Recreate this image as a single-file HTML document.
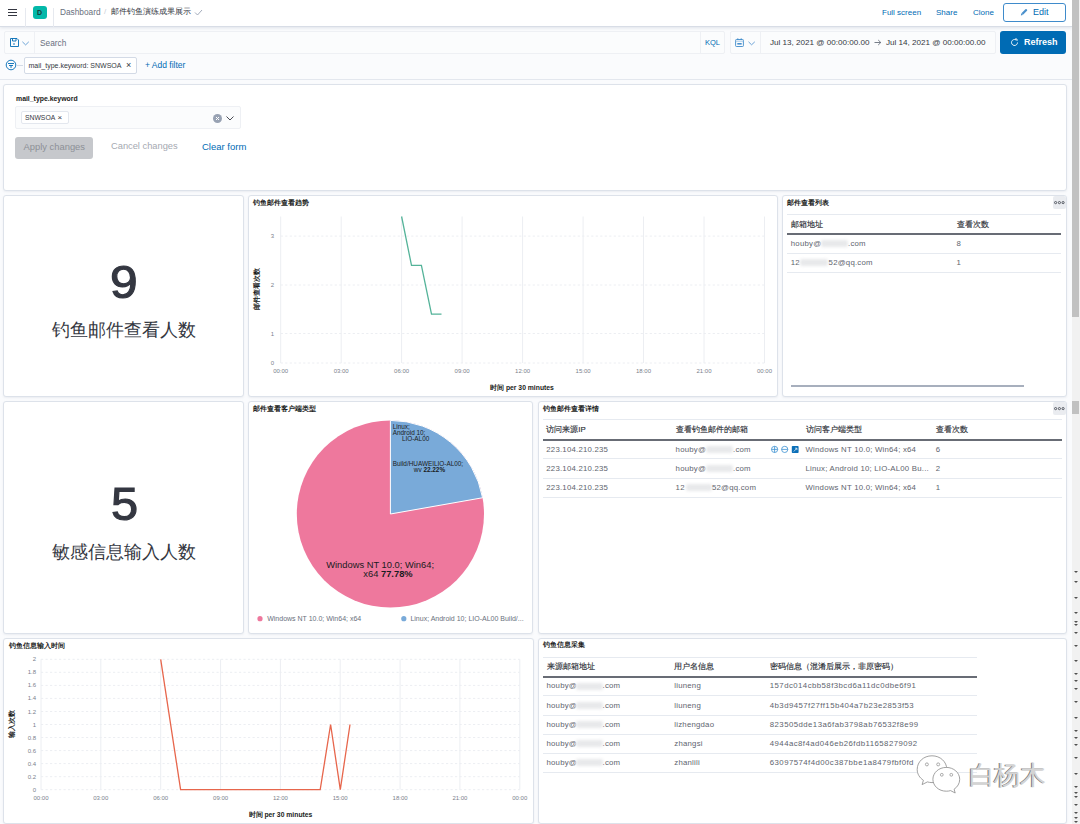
<!DOCTYPE html>
<html><head><meta charset="utf-8">
<style>
*{margin:0;padding:0;box-sizing:border-box}
html,body{width:1080px;height:824px;overflow:hidden}
body{background:#fafbfd;font-family:"Liberation Sans",sans-serif;color:#343741;position:relative}
.a{position:absolute}
.t{position:absolute;white-space:nowrap;line-height:1}
.pnl{position:absolute;background:#fff;border:1px solid #dde2ea;border-radius:3px;box-shadow:0 1px 2px rgba(152,162,179,.15)}
.lnk{color:#006bb4}
.vl{position:absolute;width:1px;background:#eef0f3}
.xl{width:40px;text-align:center;font-size:6px;color:#7b818c}
.yl{width:20px;text-align:right;font-size:6px;color:#7b818c}
.ttl{font-size:6.6px;font-weight:700;color:#1a1c21}
.th{margin-top:.7px;font-size:8px;font-weight:400;color:#2b2e35;-webkit-text-stroke:0.15px #2b2e35}
.td{margin-top:.4px;font-size:8px;letter-spacing:.22px;color:#60646e}
.hs{font-size:8px;letter-spacing:.45px}
.blr{background:#e8e9eb;filter:blur(1.4px);border-radius:2px}
.dots{width:13px;height:13px;background:#eaecf0;border-radius:2px}
.arw{left:1073.5px;width:0;height:0;border-left:2.5px solid transparent;border-right:2.5px solid transparent;border-top:2.5px solid #505050}
.hd{position:absolute;height:0;border-top:1px dashed #e9ecf1}
</style></head><body>

<!-- header -->
<div class="a" style="left:0;top:0;width:1072px;height:27px;background:#fff;border-bottom:1px solid #d8dde6;box-shadow:0 1px 3px rgba(152,162,179,.25)"></div>
<div class="a" style="left:8px;top:9.2px;width:9px;height:1.1px;background:#343741"></div>
<div class="a" style="left:8px;top:12.2px;width:9px;height:1.1px;background:#343741"></div>
<div class="a" style="left:8px;top:15.2px;width:9px;height:1.1px;background:#343741"></div>
<div class="a" style="left:25px;top:8px;width:1px;height:18.5px;background:#e6e9ef"></div>
<div class="a" style="left:33px;top:5.8px;width:13.8px;height:13.6px;background:#03b8a9;border-radius:3px"></div>
<div class="t" style="left:37px;top:8.5px;font-size:7px;font-weight:700;color:#1d3a36">D</div>
<div class="a" style="left:53px;top:8px;width:1px;height:18.5px;background:#e6e9ef"></div>
<div class="t" style="left:60px;top:8px;font-size:8.3px;color:#69707d">Dashboard</div>
<div class="t" style="left:104px;top:8px;font-size:8px;color:#c9ced6">/</div>
<div class="t" style="left:111px;top:8.3px;font-size:7.65px;color:#343741">邮件钓鱼演练成果展示</div>
<svg class="a" style="left:194px;top:9px" width="9" height="7" viewBox="0 0 9 7"><path d="M1 3.5 L3.5 6 L8 1" fill="none" stroke="#98a2b3" stroke-width="0.9"/></svg>
<div class="t lnk" style="left:882px;top:8.5px;font-size:8px">Full screen</div>
<div class="t lnk" style="left:936px;top:8.5px;font-size:8px">Share</div>
<div class="t lnk" style="left:973px;top:8.5px;font-size:8px">Clone</div>
<div class="a" style="left:1003px;top:3px;width:63px;height:19px;border:1px solid #3f8bcb;border-radius:3px;background:#fff"></div>
<svg class="a" style="left:1020px;top:8px" width="8" height="8" viewBox="0 0 8 8"><path d="M0.9 7.4 L1.2 5.5 L5.4 1.2 Q6 0.7 6.6 1.2 L7.1 1.7 Q7.5 2.3 7 2.8 L2.8 7.1 Z" fill="#4a90cc"/><path d="M1.6 5.3 L3.2 6.9" stroke="#fff" stroke-width="0.5"/></svg>
<div class="t lnk" style="left:1033px;top:7.5px;font-size:9px">Edit</div>

<!-- search row -->
<div class="a" style="left:4px;top:31px;width:721px;height:23px;background:#fbfcfd;border:1px solid #eef0f4;border-radius:2px"></div>
<div class="a" style="left:34px;top:31px;width:1px;height:23px;background:#eef0f4"></div>
<svg class="a" style="left:10px;top:38px" width="9" height="9" viewBox="0 0 9 9"><path d="M0.5 0.5 H7 L8.5 2 V8.5 H0.5 Z M2.5 0.5 V3 H6 V0.5 M3 6 h2" fill="none" stroke="#006bb4" stroke-width="0.9"/></svg>
<svg class="a" style="left:22px;top:40.5px" width="8" height="5" viewBox="0 0 8 5"><path d="M0.4 0.8 L3.6 3.9 L6.8 0.8" fill="none" stroke="#5c9ad2" stroke-width="0.9"/></svg>
<div class="t" style="left:40px;top:38.5px;font-size:8.3px;color:#69707d">Search</div>
<div class="a" style="left:700px;top:31px;width:1px;height:23px;background:#eef0f4"></div>
<div class="t lnk" style="left:705px;top:38.5px;font-size:7.5px">KQL</div>
<div class="a" style="left:730px;top:31px;width:266px;height:23px;background:#fbfcfd;border:1px solid #eef0f4;border-radius:2px"></div>
<div class="a" style="left:760px;top:31px;width:1px;height:23px;background:#eef0f4"></div>
<svg class="a" style="left:735px;top:38px" width="9" height="9" viewBox="0 0 9 9"><rect x="0.6" y="1.5" width="7.8" height="7" rx="0.8" fill="none" stroke="#3f8bcb" stroke-width="0.9"/><path d="M0.6 3.2 H8.4" stroke="#8fbbe2" stroke-width="0.8"/><rect x="2.3" y="5" width="4.4" height="1.6" fill="#4a92cf"/><path d="M2.8 0.3 V2 M6.2 0.3 V2" stroke="#3f8bcb" stroke-width="0.9"/></svg>
<svg class="a" style="left:747.5px;top:40.5px" width="8" height="5" viewBox="0 0 8 5"><path d="M0.5 0.8 L3.6 3.8 L6.8 0.8" fill="none" stroke="#5c9ad2" stroke-width="0.9"/></svg>
<div class="t" style="left:770px;top:38.5px;font-size:8.1px;color:#343741">Jul 13, 2021 @ 00:00:00.00</div>
<svg class="a" style="left:874px;top:39px" width="8" height="7" viewBox="0 0 8 7"><path d="M0.5 3.5 H6.8 M4.2 1 L6.8 3.5 L4.2 6" fill="none" stroke="#69707d" stroke-width="0.9"/></svg>
<div class="t" style="left:886px;top:38.5px;font-size:8.1px;color:#343741">Jul 14, 2021 @ 00:00:00.00</div>
<div class="a" style="left:1000px;top:31px;width:66px;height:23px;background:#006bb4;border-radius:3px"></div>
<svg class="a" style="left:1010px;top:38px" width="9" height="9" viewBox="0 0 9 9"><path d="M7.5 4.5 A3 3 0 1 1 6 1.9" fill="none" stroke="#fff" stroke-width="0.9"/><path d="M5 1 H7 V3" fill="none" stroke="#fff" stroke-width="0.9"/></svg>
<div class="t" style="left:1024px;top:37.5px;font-size:9px;font-weight:700;color:#fff">Refresh</div>

<!-- filter row -->
<svg class="a" style="left:5px;top:59px" width="12" height="12" viewBox="0 0 12 12"><circle cx="6" cy="6" r="4.8" fill="none" stroke="#006bb4" stroke-width="0.9"/><path d="M3 4.5 H9 M4 6.5 H8 M6 6.5 V9" stroke="#006bb4" stroke-width="0.9"/></svg>
<div class="a" style="left:17px;top:65px;width:6px;height:1px;background:#d3dae6"></div>
<div class="a" style="left:24px;top:57px;width:113px;height:17px;background:#fff;border:1px solid #d3dae6;border-radius:2px"></div>
<div class="t" style="left:28.5px;top:61.8px;font-size:7px;color:#343741">mail_type.keyword: SNWSOA</div>
<div class="t" style="left:126px;top:60.5px;font-size:9px;color:#343741">×</div>
<div class="t lnk" style="left:145px;top:61px;font-size:8.5px">+ Add filter</div>
<div class="a" style="left:0;top:79px;width:1072px;height:1px;background:#e3e7ee"></div>

<!-- panels -->
<div class="pnl" style="left:3px;top:84px;width:1064px;height:107px"></div>
<div class="pnl" style="left:3px;top:195px;width:241px;height:202px"></div>
<div class="pnl" style="left:248px;top:195px;width:530px;height:202px"></div>
<div class="pnl" style="left:782px;top:195px;width:285px;height:202px"></div>
<div class="pnl" style="left:3px;top:401px;width:241px;height:233px"></div>
<div class="pnl" style="left:248px;top:401px;width:285px;height:233px"></div>
<div class="pnl" style="left:538px;top:401px;width:529px;height:233px"></div>
<div class="pnl" style="left:3px;top:638px;width:531px;height:186px"></div>
<div class="pnl" style="left:538px;top:638px;width:529px;height:186px"></div>


<!-- controls panel content -->
<div class="t" style="left:16px;top:96px;font-size:6.9px;font-weight:700;color:#1a1c21">mail_type.keyword</div>
<div class="a" style="left:15px;top:106px;width:226px;height:23px;background:#fbfcfd;border:1px solid #eef0f4;border-radius:2px"></div>
<div class="a" style="left:20.5px;top:111px;width:48px;height:13px;background:#fff;border:1px solid #e3e7ee;border-radius:2px"></div>
<div class="t" style="left:25px;top:115px;font-size:6.8px;color:#343741">SNWSOA</div>
<div class="t" style="left:57.5px;top:114px;font-size:8px;color:#343741">×</div>
<div class="a" style="left:213px;top:113.5px;width:9px;height:9px;border-radius:50%;background:#98a2b3"></div>
<svg class="a" style="left:213px;top:113.5px" width="9" height="9" viewBox="0 0 9 9"><path d="M3 3 L6 6 M6 3 L3 6" stroke="#fff" stroke-width="1"/></svg>
<svg class="a" style="left:226px;top:116px" width="8" height="5" viewBox="0 0 8 5"><path d="M0.5 0.5 L4 4 L7.5 0.5" fill="none" stroke="#343741" stroke-width="0.9"/></svg>
<div class="a" style="left:15px;top:137px;width:78px;height:22px;background:#c6c8cc;border-radius:3px"></div>
<div class="t" style="left:23.5px;top:141.8px;font-size:9.4px;color:#8d9097">Apply changes</div>
<div class="t" style="left:111px;top:142.3px;font-size:9.3px;color:#a5a9b1">Cancel changes</div>
<div class="t lnk" style="left:202px;top:141.8px;font-size:9.5px">Clear form</div>

<!-- metric 9 -->
<div class="t" style="left:110px;top:258.5px;font-size:46px;font-weight:400;-webkit-text-stroke:1.1px #343741;color:#343741;transform:scaleX(1.08);transform-origin:0 0">9</div>
<div class="t" style="left:52px;top:320.8px;font-size:18.2px;color:#343741">钓鱼邮件查看人数</div>
<!-- metric 5 -->
<div class="t" style="left:110.5px;top:481px;font-size:46px;font-weight:400;-webkit-text-stroke:1.1px #343741;color:#343741;transform:scaleX(1.06);transform-origin:0 0">5</div>
<div class="t" style="left:52px;top:542.8px;font-size:18.2px;color:#343741">敏感信息输入人数</div>


<!-- chart titles -->
<div class="t ttl" style="left:253px;top:199.5px">钓鱼邮件查看趋势</div>
<div class="t ttl" style="left:253.5px;top:260px;transform:rotate(-90deg);transform-origin:0 0;top:310px">邮件查看次数</div>
<div class="t ttl" style="left:490px;top:385px;font-size:6.8px">时间 per 30 minutes</div>
<div class="t ttl" style="left:9px;top:642.5px">钓鱼信息输入时间</div>
<div class="t ttl" style="left:9px;top:738px;transform:rotate(-90deg);transform-origin:0 0">输入次数</div>
<div class="t ttl" style="left:248.5px;top:812px;font-size:6.8px">时间 per 30 minutes</div>
<svg class="a" style="left:0;top:0" width="1080" height="824" viewBox="0 0 1080 824">
<line x1="280.7" y1="216.5" x2="280.7" y2="363" stroke="#eceef2" stroke-width="1"/>
<line x1="341.2" y1="216.5" x2="341.2" y2="363" stroke="#eceef2" stroke-width="1"/>
<line x1="401.6" y1="216.5" x2="401.6" y2="363" stroke="#eceef2" stroke-width="1"/>
<line x1="462.1" y1="216.5" x2="462.1" y2="363" stroke="#eceef2" stroke-width="1"/>
<line x1="522.6" y1="216.5" x2="522.6" y2="363" stroke="#eceef2" stroke-width="1"/>
<line x1="583.1" y1="216.5" x2="583.1" y2="363" stroke="#eceef2" stroke-width="1"/>
<line x1="643.5" y1="216.5" x2="643.5" y2="363" stroke="#eceef2" stroke-width="1"/>
<line x1="704.0" y1="216.5" x2="704.0" y2="363" stroke="#eceef2" stroke-width="1"/>
<line x1="764.5" y1="216.5" x2="764.5" y2="363" stroke="#eceef2" stroke-width="1"/>
<line x1="280.7" y1="236.1" x2="764.5" y2="236.1" stroke="#eceef2" stroke-width="1" stroke-dasharray="2.2 2.3"/>
<line x1="280.7" y1="285" x2="764.5" y2="285" stroke="#eceef2" stroke-width="1" stroke-dasharray="2.2 2.3"/>
<line x1="280.7" y1="333.5" x2="764.5" y2="333.5" stroke="#eceef2" stroke-width="1" stroke-dasharray="2.2 2.3"/>
<line x1="280.7" y1="363" x2="764.5" y2="363" stroke="#eceef2" stroke-width="1" stroke-dasharray="2.2 2.3"/>
<polyline points="401.6,216.5 411.5,265.4 421.4,265.4 431.5,314.1 441.5,314.1" fill="none" stroke="#54b399" stroke-width="1.3"/>
<line x1="41.0" y1="659.3" x2="41.0" y2="789.7" stroke="#eceef2" stroke-width="1"/>
<line x1="100.8" y1="659.3" x2="100.8" y2="789.7" stroke="#eceef2" stroke-width="1"/>
<line x1="160.7" y1="659.3" x2="160.7" y2="789.7" stroke="#eceef2" stroke-width="1"/>
<line x1="220.6" y1="659.3" x2="220.6" y2="789.7" stroke="#eceef2" stroke-width="1"/>
<line x1="280.4" y1="659.3" x2="280.4" y2="789.7" stroke="#eceef2" stroke-width="1"/>
<line x1="340.2" y1="659.3" x2="340.2" y2="789.7" stroke="#eceef2" stroke-width="1"/>
<line x1="400.1" y1="659.3" x2="400.1" y2="789.7" stroke="#eceef2" stroke-width="1"/>
<line x1="459.9" y1="659.3" x2="459.9" y2="789.7" stroke="#eceef2" stroke-width="1"/>
<line x1="519.8" y1="659.3" x2="519.8" y2="789.7" stroke="#eceef2" stroke-width="1"/>
<line x1="41" y1="659.3" x2="519.8" y2="659.3" stroke="#eceef2" stroke-width="1" stroke-dasharray="2.2 2.3"/>
<line x1="41" y1="672.3" x2="519.8" y2="672.3" stroke="#eceef2" stroke-width="1" stroke-dasharray="2.2 2.3"/>
<line x1="41" y1="685.4" x2="519.8" y2="685.4" stroke="#eceef2" stroke-width="1" stroke-dasharray="2.2 2.3"/>
<line x1="41" y1="698.4" x2="519.8" y2="698.4" stroke="#eceef2" stroke-width="1" stroke-dasharray="2.2 2.3"/>
<line x1="41" y1="711.5" x2="519.8" y2="711.5" stroke="#eceef2" stroke-width="1" stroke-dasharray="2.2 2.3"/>
<line x1="41" y1="724.5" x2="519.8" y2="724.5" stroke="#eceef2" stroke-width="1" stroke-dasharray="2.2 2.3"/>
<line x1="41" y1="737.5" x2="519.8" y2="737.5" stroke="#eceef2" stroke-width="1" stroke-dasharray="2.2 2.3"/>
<line x1="41" y1="750.6" x2="519.8" y2="750.6" stroke="#eceef2" stroke-width="1" stroke-dasharray="2.2 2.3"/>
<line x1="41" y1="763.6" x2="519.8" y2="763.6" stroke="#eceef2" stroke-width="1" stroke-dasharray="2.2 2.3"/>
<line x1="41" y1="776.7" x2="519.8" y2="776.7" stroke="#eceef2" stroke-width="1" stroke-dasharray="2.2 2.3"/>
<line x1="41" y1="789.7" x2="519.8" y2="789.7" stroke="#eceef2" stroke-width="1" stroke-dasharray="2.2 2.3"/>
<polyline points="160.7,659.3 180.6,789.7 320.2,789.7 330.6,724.5 340.3,789.7 350.0,724.5" fill="none" stroke="#e7664c" stroke-width="1.3"/>
</svg>
<div class="t xl" style="left:260.7px;top:368px">00:00</div>
<div class="t xl" style="left:321.2px;top:368px">03:00</div>
<div class="t xl" style="left:381.6px;top:368px">06:00</div>
<div class="t xl" style="left:442.1px;top:368px">09:00</div>
<div class="t xl" style="left:502.6px;top:368px">12:00</div>
<div class="t xl" style="left:563.1px;top:368px">15:00</div>
<div class="t xl" style="left:623.5px;top:368px">18:00</div>
<div class="t xl" style="left:684.0px;top:368px">21:00</div>
<div class="t xl" style="left:744.5px;top:368px">00:00</div>
<div class="t yl" style="left:254px;top:233.1px">3</div>
<div class="t yl" style="left:254px;top:282.0px">2</div>
<div class="t yl" style="left:254px;top:330.5px">1</div>
<div class="t yl" style="left:254px;top:360.0px">0</div>
<div class="t xl" style="left:21.0px;top:795px">00:00</div>
<div class="t xl" style="left:80.8px;top:795px">03:00</div>
<div class="t xl" style="left:140.7px;top:795px">06:00</div>
<div class="t xl" style="left:200.6px;top:795px">09:00</div>
<div class="t xl" style="left:260.4px;top:795px">12:00</div>
<div class="t xl" style="left:320.2px;top:795px">15:00</div>
<div class="t xl" style="left:380.1px;top:795px">18:00</div>
<div class="t xl" style="left:439.9px;top:795px">21:00</div>
<div class="t xl" style="left:499.8px;top:795px">00:00</div>
<div class="t yl" style="left:16px;top:656.3px">2</div>
<div class="t yl" style="left:16px;top:669.3px">1.8</div>
<div class="t yl" style="left:16px;top:682.4px">1.6</div>
<div class="t yl" style="left:16px;top:695.4px">1.4</div>
<div class="t yl" style="left:16px;top:708.5px">1.2</div>
<div class="t yl" style="left:16px;top:721.5px">1</div>
<div class="t yl" style="left:16px;top:734.5px">0.8</div>
<div class="t yl" style="left:16px;top:747.6px">0.6</div>
<div class="t yl" style="left:16px;top:760.6px">0.4</div>
<div class="t yl" style="left:16px;top:773.7px">0.2</div>
<div class="t yl" style="left:16px;top:786.7px">0</div>

<!-- tables -->
<div class="t ttl" style="left:787px;top:199.8px;font-size:6.6px">邮件查看列表</div>
<div class="a dots" style="left:1053px;top:196px"><svg width="13" height="13" viewBox="0 0 13 13" style="position:absolute;left:0;top:0"><g fill="none" stroke="#4a4e57" stroke-width="0.9"><circle cx="2.6" cy="6.6" r="1.1"/><circle cx="6.4" cy="6.6" r="1.1"/><circle cx="10.1" cy="6.6" r="1.1"/></g></svg></div>
<div class="a" style="left:787.0px;top:214.0px;width:274.0px;height:1px;background:#e6eaf0"></div>
<div class="t th" style="left:790.8px;top:220.0px;font-size:7.8px">邮箱地址</div>
<div class="t th" style="left:956.6px;top:220.0px;font-size:7.8px">查看次数</div>
<div class="a" style="left:787.0px;top:232.8px;width:274.0px;height:2px;background:#686c75"></div>
<div class="t td" style="left:790.8px;top:239.8px;font-size:7.8px">houby@</div>
<div class="a blr" style="left:821.0px;top:240.2px;width:27.0px;height:7px"></div>
<div class="t td" style="left:848.0px;top:239.8px;font-size:7.8px">.com</div>
<div class="t td" style="left:956.6px;top:239.8px;font-size:7.8px">8</div>
<div class="a" style="left:787.0px;top:253.0px;width:274.0px;height:1px;background:#e6eaf0"></div>
<div class="t td" style="left:790.8px;top:259.0px;font-size:7.8px">12</div>
<div class="a blr" style="left:800.0px;top:259.4px;width:28.0px;height:7px"></div>
<div class="t td" style="left:828.6px;top:259.0px;font-size:7.8px">52@qq.com</div>
<div class="t td" style="left:956.6px;top:259.0px;font-size:7.8px">1</div>
<div class="a" style="left:787.0px;top:272.0px;width:274.0px;height:1px;background:#e6eaf0"></div>
<div class="a" style="left:790.5px;top:385.3px;width:233.9px;height:2px;background:#a7afbd"></div>
<div class="t ttl" style="left:543px;top:405.6px;font-size:6.6px">钓鱼邮件查看详情</div>
<div class="a dots" style="left:1053px;top:401.5px"><svg width="13" height="13" viewBox="0 0 13 13" style="position:absolute;left:0;top:0"><g fill="none" stroke="#4a4e57" stroke-width="0.9"><circle cx="2.6" cy="6.6" r="1.1"/><circle cx="6.4" cy="6.6" r="1.1"/><circle cx="10.1" cy="6.6" r="1.1"/></g></svg></div>
<div class="a" style="left:543.0px;top:418.9px;width:518.6px;height:1px;background:#e6eaf0"></div>
<div class="t th" style="left:546.3px;top:425.3px;font-size:7.8px">访问来源IP</div>
<div class="t th" style="left:675.6px;top:425.3px;font-size:7.8px">查看钓鱼邮件的邮箱</div>
<div class="t th" style="left:805.5px;top:425.3px;font-size:7.8px">访问客户端类型</div>
<div class="t th" style="left:935.7px;top:425.3px;font-size:7.8px">查看次数</div>
<div class="a" style="left:543.0px;top:438.6px;width:518.6px;height:2px;background:#686c75"></div>
<div class="t td" style="left:546.3px;top:445.2px;font-size:7.8px">223.104.210.235</div>
<div class="t td" style="left:675.6px;top:445.2px;font-size:7.8px">houby@</div>
<div class="a blr" style="left:706.0px;top:445.6px;width:27.0px;height:7px"></div>
<div class="t td" style="left:733.0px;top:445.2px;font-size:7.8px">.com</div>
<div class="t td" style="left:805.5px;top:445.2px;font-size:7.8px">Windows NT 10.0; Win64; x64</div>
<div class="t td" style="left:935.7px;top:445.2px;font-size:7.8px">6</div>
<div class="a" style="left:543.0px;top:457.8px;width:518.6px;height:1px;background:#e6eaf0"></div>
<div class="t td" style="left:546.3px;top:464.5px;font-size:7.8px">223.104.210.235</div>
<div class="t td" style="left:675.6px;top:464.5px;font-size:7.8px">houby@</div>
<div class="a blr" style="left:706.0px;top:464.9px;width:27.0px;height:7px"></div>
<div class="t td" style="left:733.0px;top:464.5px;font-size:7.8px">.com</div>
<div class="t td" style="left:805.5px;top:464.5px;font-size:7.8px">Linux; Android 10; LIO-AL00 Bu...</div>
<div class="t td" style="left:935.7px;top:464.5px;font-size:7.8px">2</div>
<div class="a" style="left:543.0px;top:477.7px;width:518.6px;height:1px;background:#e6eaf0"></div>
<div class="t td" style="left:546.3px;top:483.5px;font-size:7.8px">223.104.210.235</div>
<div class="t td" style="left:675.6px;top:483.5px;font-size:7.8px">12</div>
<div class="a blr" style="left:686.0px;top:483.9px;width:26.0px;height:7px"></div>
<div class="t td" style="left:712.0px;top:483.5px;font-size:7.8px">52@qq.com</div>
<div class="t td" style="left:805.5px;top:483.5px;font-size:7.8px">Windows NT 10.0; Win64; x64</div>
<div class="t td" style="left:935.7px;top:483.5px;font-size:7.8px">1</div>
<div class="a" style="left:543.0px;top:497.1px;width:518.6px;height:1px;background:#e6eaf0"></div>
<svg class="a" style="left:770px;top:445px" width="30" height="9" viewBox="0 0 30 9"><circle cx="4.6" cy="4.4" r="3.1" fill="none" stroke="#3a8fd0" stroke-width="0.8"/><path d="M1.5 4.4 H7.7 M4.6 1.3 V7.5" stroke="#3a8fd0" stroke-width="0.8"/><circle cx="14.7" cy="4.4" r="3.1" fill="none" stroke="#3a8fd0" stroke-width="0.8"/><path d="M11.6 4.4 H17.8" stroke="#3a8fd0" stroke-width="0.8"/><rect x="21.8" y="1" width="6.8" height="7" rx="0.8" fill="#0b6fb8"/><path d="M23.8 6.5 L26.8 3.3 M25 3.2 H26.9 V5.1" stroke="#fff" stroke-width="0.7" fill="none"/></svg>
<div class="t ttl" style="left:542.6px;top:642.4px;font-size:6.6px">钓鱼信息采集</div>
<div class="a" style="left:543.0px;top:656.7px;width:433.6px;height:1px;background:#e6eaf0"></div>
<div class="t th" style="left:546.5px;top:662.5px;font-size:7.8px">来源邮箱地址</div>
<div class="t th" style="left:674.3px;top:662.5px;font-size:7.8px">用户名信息</div>
<div class="t th" style="left:769.8px;top:662.5px;font-size:7.8px">密码信息（混淆后展示，非原密码）</div>
<div class="a" style="left:543.0px;top:675.6px;width:433.6px;height:2px;background:#686c75"></div>
<div class="t td" style="left:546.5px;top:682.1px;font-size:7.8px">houby@</div>
<div class="a blr" style="left:576.0px;top:682.5px;width:27.0px;height:7px"></div>
<div class="t td" style="left:602.5px;top:682.1px;font-size:7.8px">.com</div>
<div class="t td" style="left:674.3px;top:682.1px;font-size:7.8px">liuneng</div>
<div class="t td hs" style="left:769.8px;top:682.1px;font-size:7.8px">157dc014cbb58f3bcd6a11dc0dbe6f91</div>
<div class="a" style="left:543.0px;top:694.9px;width:433.6px;height:1px;background:#e6eaf0"></div>
<div class="t td" style="left:546.5px;top:701.5px;font-size:7.8px">houby@</div>
<div class="a blr" style="left:576.0px;top:701.9px;width:27.0px;height:7px"></div>
<div class="t td" style="left:602.5px;top:701.5px;font-size:7.8px">.com</div>
<div class="t td" style="left:674.3px;top:701.5px;font-size:7.8px">liuneng</div>
<div class="t td hs" style="left:769.8px;top:701.5px;font-size:7.8px">4b3d9457f27ff15b404a7b23e2853f53</div>
<div class="a" style="left:543.0px;top:714.8px;width:433.6px;height:1px;background:#e6eaf0"></div>
<div class="t td" style="left:546.5px;top:720.8px;font-size:7.8px">houby@</div>
<div class="a blr" style="left:576.0px;top:721.2px;width:27.0px;height:7px"></div>
<div class="t td" style="left:602.5px;top:720.8px;font-size:7.8px">.com</div>
<div class="t td" style="left:674.3px;top:720.8px;font-size:7.8px">lizhengdao</div>
<div class="t td hs" style="left:769.8px;top:720.8px;font-size:7.8px">823505dde13a6fab3798ab76532f8e99</div>
<div class="a" style="left:543.0px;top:733.9px;width:433.6px;height:1px;background:#e6eaf0"></div>
<div class="t td" style="left:546.5px;top:739.9px;font-size:7.8px">houby@</div>
<div class="a blr" style="left:576.0px;top:740.3px;width:27.0px;height:7px"></div>
<div class="t td" style="left:602.5px;top:739.9px;font-size:7.8px">.com</div>
<div class="t td" style="left:674.3px;top:739.9px;font-size:7.8px">zhangsi</div>
<div class="t td hs" style="left:769.8px;top:739.9px;font-size:7.8px">4944ac8f4ad046eb26fdb11658279092</div>
<div class="a" style="left:543.0px;top:753.0px;width:433.6px;height:1px;background:#e6eaf0"></div>
<div class="t td" style="left:546.5px;top:759.0px;font-size:7.8px">houby@</div>
<div class="a blr" style="left:576.0px;top:759.4px;width:27.0px;height:7px"></div>
<div class="t td" style="left:602.5px;top:759.0px;font-size:7.8px">.com</div>
<div class="t td" style="left:674.3px;top:759.0px;font-size:7.8px">zhanlili</div>
<div class="t td hs" style="left:769.8px;top:759.0px;font-size:7.8px">63097574f4d00c387bbe1a8479fbf0fd</div>
<div class="a" style="left:543.0px;top:772.1px;width:433.6px;height:1px;background:#e6eaf0"></div>

<!-- pie -->
<svg class="a" style="left:0;top:0" width="1080" height="824" viewBox="0 0 1080 824">
<circle cx="390.4" cy="514.0" r="93.6" fill="#ee789d"/>
<path d="M390.4 514.0 L390.4 420.4 A93.6 93.6 0 0 1 482.58 497.75 Z" fill="#79aad9" stroke="#fff" stroke-width="1" stroke-linejoin="round"/>
<circle cx="260" cy="618.7" r="2.6" fill="#ee789d"/>
<circle cx="403.8" cy="618.7" r="2.6" fill="#79aad9"/>
</svg>
<div class="t" style="left:253.3px;top:405.6px;font-size:6.6px;font-weight:700;color:#1a1c21">邮件查看客户端类型</div>
<div class="t" style="left:392.7px;top:423.9px;font-size:6.4px;color:#1a1c21">Linux;</div>
<div class="t" style="left:392.7px;top:430.0px;font-size:6.4px;color:#1a1c21">Android 10;</div>
<div class="t" style="left:401.9px;top:436.0px;font-size:6.4px;color:#1a1c21">LIO-AL00</div>
<div class="t" style="left:392.7px;top:460.9px;font-size:6.4px;color:#1a1c21">Build/HUAWEILIO-AL00;</div>
<div class="t" style="left:413.8px;top:467.2px;font-size:6.4px;color:#1a1c21">wv <b>22.22%</b></div>
<div class="t" style="left:326.2px;top:560.7px;font-size:9.35px;color:#1a1c21">Windows NT 10.0; Win64;</div>
<div class="t" style="left:363.3px;top:569.6px;font-size:9.35px;color:#1a1c21">x64 <b>77.78%</b></div>
<div class="t" style="left:267.2px;top:615.2px;font-size:7.0px;color:#69707d">Windows NT 10.0; Win64; x64</div>
<div class="t" style="left:410.4px;top:615.2px;font-size:7.0px;color:#69707d">Linux; Android 10; LIO-AL00 Build/...</div>

<!-- scrollbar -->
<div class="a" style="left:1072px;top:0;width:8px;height:824px;background:#f1f1f1"></div>
<div class="a" style="left:1072px;top:0;width:7px;height:317px;background:#c1c1c1"></div>


<!-- watermark -->
<svg class="a" style="left:912px;top:752px" width="50" height="44" viewBox="912 752 50 44">
<g fill="#fff" stroke="#8a8a8a" stroke-width="0.8">
<path d="M932 755.8 C923.5 755.8 917.2 761.8 917.2 769.4 C917.2 774 919.6 777.8 923.4 780.3 L922.1 784.6 L927.4 781.9 C928.8 782.3 930.4 782.6 932 782.6 C940.3 782.6 946.8 776.6 946.8 769.4 C946.8 761.8 940.3 755.8 932 755.8 Z"/>
<path d="M946.3 767.4 C938.8 767.4 932.9 772.7 932.9 779.3 C932.9 785.9 938.8 791.2 946.3 791.2 C947.8 791.2 949.3 791 950.6 790.6 L955.2 793 L954.1 789.2 C957.5 787 959.7 783.4 959.7 779.3 C959.7 772.7 953.7 767.4 946.3 767.4 Z"/>
</g>
<g fill="#fff" stroke="#8a8a8a" stroke-width="0.7">
<circle cx="926.9" cy="764.4" r="1.5"/><circle cx="938.2" cy="764.4" r="1.5"/>
<circle cx="941.8" cy="774.8" r="1.4"/><circle cx="951.3" cy="774.8" r="1.4"/>
</g>
</svg>
<div class="t" style="left:968.5px;top:762.5px;font-size:25.5px;color:#d4d4d4;text-shadow:-0.6px 0 0 #7a7a7a;letter-spacing:-0.5px">白杨木</div>

<div class="a" style="left:1072px;top:401px;width:7px;height:13px;background:#c1c1c1"></div>
<div class="a arw" style="top:571.1px"></div>
<div class="a arw" style="top:581.2px"></div>
<div class="a arw" style="top:596.5px"></div>
<div class="a arw" style="top:611.8px"></div>
<div class="a arw" style="top:621.3px"></div>
<div class="a arw" style="top:624.2px"></div>
<div class="a arw" style="top:631.8px"></div>
<div class="a arw" style="top:644.5px"></div>
<div class="a arw" style="top:660.3px"></div>
<div class="a arw" style="top:673.4px"></div>
<div class="a arw" style="top:680.0px"></div>
<div class="a arw" style="top:687.8px"></div>
<div class="a arw" style="top:701.0px"></div>
<div class="a arw" style="top:716.8px"></div>
<div class="a arw" style="top:729.5px"></div>
<div class="a arw" style="top:736.8px"></div>
<div class="a arw" style="top:744.1px"></div>
<div class="a arw" style="top:757.1px"></div>
<div class="a arw" style="top:773.0px"></div>
<div class="a arw" style="top:786.0px"></div>
<div class="a arw" style="top:792.1px"></div>
<div class="a arw" style="top:796.1px"></div>
<div class="a arw" style="top:803.9px"></div>
<div class="a arw" style="top:811.6px"></div>
<div class="a arw" style="top:817.3px"></div>
<div class="a arw" style="top:820.5px"></div>
</body></html>
